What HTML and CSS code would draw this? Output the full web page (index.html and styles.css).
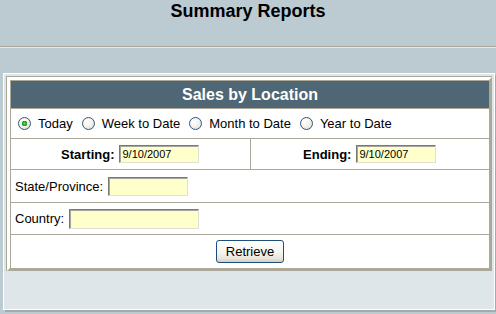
FILE: index.html
```html
<!DOCTYPE html>
<html>
<head>
<meta charset="utf-8">
<title>Summary Reports</title>
<link rel="stylesheet" href="styles.css">
</head>
<body>
<header class="top">
  <h1 class="title">Summary Reports</h1>
</header>
<div class="panel">
  <div class="frame">
    <table class="report">
      <tr>
        <th class="head" colspan="2">Sales by Location</th>
      </tr>
      <tr>
        <td class="cell row-radio" colspan="2">
          <div class="radios">
            <label class="opt"><input class="radio" type="radio" name="range" checked><span>Today</span></label>
            <label class="opt"><input class="radio" type="radio" name="range"><span>Week to Date</span></label>
            <label class="opt"><input class="radio" type="radio" name="range"><span>Month to Date</span></label>
            <label class="opt"><input class="radio" type="radio" name="range"><span>Year to Date</span></label>
          </div>
        </td>
      </tr>
      <tr>
        <td class="cell row-date center"><span class="lbl-b">Starting:</span><input class="field date" type="text" value="9/10/2007"></td>
        <td class="cell row-date center"><span class="lbl-b">Ending:</span><input class="field date" type="text" value="9/10/2007"></td>
      </tr>
      <tr>
        <td class="cell row-state" colspan="2"><span class="lbl">State/Province:</span><input class="field state" type="text"></td>
      </tr>
      <tr>
        <td class="cell row-country" colspan="2"><span class="lbl">Country:</span><input class="field country" type="text"></td>
      </tr>
      <tr>
        <td class="cell row-btn center" colspan="2"><button class="btn" type="button">Retrieve</button></td>
      </tr>
    </table>
  </div>
</div>
</body>
</html>
```
FILE: styles.css
```css
html, body {
  margin: 0;
  padding: 0;
}
body {
  background: #BCCAD2;
  font-family: "Liberation Sans", Arial, sans-serif;
  color: #000;
  width: 496px;
  height: 314px;
  overflow: hidden;
}
.top {
  height: 46px;
  border-bottom: 1px solid #A9A89A;
  box-shadow: 0 1px 0 #EBE8DD;
}
.title {
  margin: 0;
  padding-top: 1px;
  font-size: 18px;
  line-height: 20px;
  font-weight: bold;
  text-align: center;
}
.panel {
  margin: 26px 0 0 3px;
  width: 492px;
  box-sizing: border-box;
  background: #DFE6E9;
  border: 1px solid #FFFFFF;
  padding: 2px 2px 38px 2px;
  box-shadow: 2px 2px 0 #A6ABA9;
}
.frame {
  border-top: 1px solid #ACA899;
  border-left: 1px solid #ACA899;
}
.report {
  width: 100%;
  table-layout: fixed;
  border-collapse: separate;
  border-spacing: 0;
  border: 3px solid;
  border-color: #FFFFFF #ACA899 #ACA899 #FFFFFF;
}
.head {
  background: #4F6674;
  color: #FFFFFF;
  font-size: 16px;
  font-weight: bold;
  height: 27px;
  padding: 0;
  border-top: 1px solid #ACA899;
  border-left: 1px solid #ACA899;
  text-align: center;
  vertical-align: middle;
}
.cell {
  background: #FFFFFF;
  border-top: 1px solid #ACA899;
  border-left: 1px solid #ACA899;
  padding: 0 4px;
  font-size: 13px;
  vertical-align: middle;
  white-space: nowrap;
}
.center {
  text-align: center;
}
.row-radio { height: 29px; padding-left: 7px; }
.row-date { height: 30px; }
.row-state { height: 32px; }
.row-country { height: 31px; }
.row-btn { height: 33px; }

.radios {
  display: flex;
  align-items: center;
  gap: 9px;
}
.opt {
  display: flex;
  align-items: center;
  gap: 7px;
}
.radio {
  appearance: none;
  -webkit-appearance: none;
  margin: 0;
  width: 13px;
  height: 13px;
  border-radius: 50%;
  border: 1px solid #2F5679;
  box-sizing: border-box;
  background: radial-gradient(circle at 35% 35%, #FFFFFF 0%, #F4F3EE 45%, #D9D6CB 100%);
  position: relative;
}
.radio:checked {
  background:
    radial-gradient(circle at 50% 50%, #7BD67B 0%, #2AA32A 1.6px, #21A121 2.6px, transparent 3px),
    radial-gradient(circle at 35% 35%, #FFFFFF 0%, #F4F3EE 45%, #D9D6CB 100%);
}
.lbl-b {
  font-weight: bold;
  margin-right: 5px;
  vertical-align: middle;
}
.lbl {
  margin-right: 5px;
  vertical-align: middle;
}
.field {
  appearance: none;
  -webkit-appearance: none;
  box-sizing: border-box;
  margin: 0;
  padding: 0 2px;
  background: #FFFFCC;
  border: 1px solid;
  border-color: #7A7A72 #E2E0D4 #E2E0D4 #7A7A72;
  box-shadow: inset 1px 1px 0 #A6A69C;
  font-family: "Liberation Sans", Arial, sans-serif;
  font-size: 11px;
  color: #000;
  vertical-align: middle;
  outline: none;
}
.date { width: 80px; height: 18px; }
.state { width: 80px; height: 19px; }
.country { width: 130px; height: 20px; }
.btn {
  width: 68px;
  height: 23px;
  padding: 0;
  font-family: "Liberation Sans", Arial, sans-serif;
  font-size: 13px;
  color: #000;
  border: 1px solid #1D4D7D;
  border-radius: 3px;
  background: linear-gradient(#FFFFFF 0%, #F5F4EF 55%, #E6E3DA 85%, #D3CEC2 100%);
  vertical-align: middle;
}
```
